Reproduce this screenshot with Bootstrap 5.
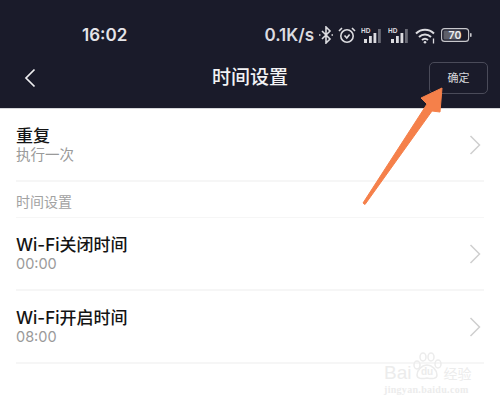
<!DOCTYPE html>
<html lang="zh">
<head>
<meta charset="UTF-8">
<meta name="viewport" content="width=device-width, initial-scale=1.0">
<title>时间设置</title>
<link href="https://cdn.jsdelivr.net/npm/bootstrap@5.3.0/dist/css/bootstrap.min.css" rel="stylesheet">
<style>
  html, body { height: 407px; overflow: hidden; }
  body { font-family: "Inter", "Noto Sans CJK SC", sans-serif; background: #fff; color: #161616; position: relative; }
  .app-head { background: #1a1b2a; height: 109px; color: #eeeef0; border-bottom: 1px solid #d5d6da; }
  .status-row { height: 48px; padding: 22px 28px 0 82px; }
  .clock { font-size: 17px; font-weight: 600; line-height: 26px; color: #e4e4e8; }
  .net { font-size: 17px; font-weight: 600; line-height: 26px; color: #dcdce0; }
  .stat-icons { gap: 5px; }
  .title-row { height: 60px; padding: 0 12px 0 24px; position: relative; }
  .back-icon { margin-top: 20px; }
  .page-title { position: absolute; left: 0; right: 0; top: 15px; text-align: center; font-size: 19px; font-weight: 500; line-height: 30px; color: #f2f2f4; }
  .ok-btn { width: 59px; height: 32px; margin-top: 14px; padding: 0; font-size: 11px; color: #d8d8dc; border: 1px solid #4a4b59; border-radius: 5px; background: transparent; }
  .set-list { padding: 0 16px; }
  .set-item { height: 73px; border-bottom: 2px solid #f6f6f6; padding: 15px 0 0; }
  .set-name { font-size: 17px; font-weight: 500; line-height: 24px; color: #141414; }
  .set-val { font-size: 14.5px; line-height: 14px; color: #9a9a9a; }
  .set-sect { height: 36px; border-bottom: 1px solid #f6f6f6; font-size: 14px; line-height: 20px; padding-top: 10px; color: #a2a2a2; }
  .chev { margin: 11px 3px 0 0; }
  .over-arrow { position: absolute; left: 355px; top: 84px; }
  .wmark { position: absolute; left: 384px; top: 352px; width: 92px; color: #ececec; white-space: nowrap; }
  .wmark-top { height: 29px; }
  .wmark-bai { font-size: 19px; line-height: 20px; margin-top: 11px; font-family: "Liberation Sans", sans-serif; }
  .wmark-cn { font-size: 14px; line-height: 16px; margin-top: 13px; font-family: "Noto Sans CJK SC", sans-serif; }
  .wmark-url { font-size: 10px; line-height: 12px; font-weight: 700; font-family: "Liberation Serif", serif; margin-top: 3px; letter-spacing: .3px; }
</style>
</head>
<body>
  <div class="app-head">
    <div class="status-row d-flex align-items-center justify-content-between">
      <span class="clock">16:02</span>
      <div class="stat-icons d-flex align-items-center">
        <span class="net">0.1K/s</span>
        <!-- bluetooth -->
        <svg width="14" height="18" viewBox="0 0 14 18" fill="none" stroke="#dcdce0" stroke-width="1.6"><path d="M3 5l8 8-4 4V1l4 4-8 8"/><path d="M0 9h1.5M12.5 9H14"/></svg>
        <!-- alarm -->
        <svg width="18" height="18" viewBox="0 0 18 18" fill="none" stroke="#dcdce0" stroke-width="1.6"><circle cx="9" cy="10" r="6.200"/><path d="M6.500 9.500l2.300 2.500 2.800-3.500M1 5l3-3M17 5l-3-3"/></svg>
        <!-- signal 1 -->
        <svg width="22" height="17" viewBox="0 0 22 17" fill="#dcdce0"><text x="0" y="6" font-size="6.500" font-weight="700" font-family="Liberation Sans">HD</text><rect x="3" y="12" width="3" height="4"/><rect x="8" y="9" width="2.800" height="7"/><rect x="12.500" y="6" width="2.800" height="10"/><rect x="17" y="2" width="2.800" height="14" fill="#6a6b76"/></svg>
        <!-- signal 2 -->
        <svg width="22" height="17" viewBox="0 0 22 17" fill="#dcdce0"><text x="0" y="6" font-size="6.500" font-weight="700" font-family="Liberation Sans">HD</text><rect x="3" y="12" width="3" height="4"/><rect x="8" y="9" width="2.800" height="7"/><rect x="12.500" y="6" width="2.800" height="10"/><rect x="17" y="2" width="2.800" height="14" fill="#6a6b76"/></svg>
        <!-- wifi -->
        <svg width="21" height="17" viewBox="0 0 21 17" fill="none" stroke="#dcdce0" stroke-width="2"><path d="M1 6.500c5.200-5 12.800-5 18 0M4 10c3.500-3.200 8.500-3.200 12 0M7 13c1.800-1.500 4.200-1.500 6 0"/><circle cx="10" cy="15.200" r="1.300" fill="#dcdce0" stroke="none"/><path d="M18.500 11.500v5" stroke-width="1.300"/></svg>
        <!-- battery -->
        <svg width="31" height="14" viewBox="0 0 31 14"><rect x=".6" y=".6" width="27" height="12.800" rx="3" fill="none" stroke="#c8c8cc" stroke-width="1.100"/><rect x="2.500" y="2.500" width="17" height="9" rx="1" fill="#5e5f69"/><rect x="29" y="5" width="1.600" height="4" rx=".8" fill="#c8c8cc"/><text x="14" y="11" text-anchor="middle" font-size="10.500" font-weight="600" font-family="Inter" fill="#eeeef0">70</text></svg>
      </div>
    </div>
    <div class="title-row d-flex align-items-start justify-content-between">
      <svg class="back-icon" width="12" height="20" viewBox="0 0 12 20" fill="none" stroke="#eeeef0" stroke-width="1.700"><path d="M10.500 1.500L2 10l8.500 8.500"/></svg>
      <div class="page-title">时间设置</div>
      <button type="button" class="btn ok-btn">确定</button>
    </div>
  </div>

  <div class="set-list">
    <div class="set-item d-flex justify-content-between">
      <div><div class="set-name">重复</div><div class="set-val">执行一次</div></div>
      <svg class="chev" width="12" height="20" viewBox="0 0 12 20" fill="none" stroke="#cfcfcf" stroke-width="1.500"><path d="M1.500 1l9 9-9 9"/></svg>
    </div>
    <div class="set-sect">时间设置</div>
    <div class="set-item d-flex justify-content-between">
      <div><div class="set-name">Wi-Fi关闭时间</div><div class="set-val">00:00</div></div>
      <svg class="chev" width="12" height="20" viewBox="0 0 12 20" fill="none" stroke="#cfcfcf" stroke-width="1.500"><path d="M1.500 1l9 9-9 9"/></svg>
    </div>
    <div class="set-item d-flex justify-content-between">
      <div><div class="set-name">Wi-Fi开启时间</div><div class="set-val">08:00</div></div>
      <svg class="chev" width="12" height="20" viewBox="0 0 12 20" fill="none" stroke="#cfcfcf" stroke-width="1.500"><path d="M1.500 1l9 9-9 9"/></svg>
    </div>
  </div>

  <!-- annotation arrow over the screenshot -->
  <svg class="over-arrow" width="95" height="125" viewBox="0 0 95 125" fill="#f5804a"><path d="M87 4L66 14 72 20 8 119 10 120.500 77 27 85 28z" stroke="#f5804a" stroke-width="1" stroke-linejoin="round"/></svg>

  <div class="wmark">
    <div class="wmark-top d-flex">
      <span class="wmark-bai">Bai</span>
      <svg width="32" height="29" viewBox="0 0 32 29" fill="none" stroke="#ececec" stroke-width="1.500"><ellipse cx="6" cy="13" rx="3" ry="4"/><ellipse cx="12" cy="5" rx="3" ry="4"/><ellipse cx="20" cy="5" rx="3" ry="4"/><ellipse cx="27" cy="12" rx="3" ry="4"/><path d="M6 23c0-5 5-10 10-10s10 5 10 10c0 4-5 4-10 3-5 1-10 1-10-3z"/><text x="16" y="23" text-anchor="middle" font-size="10" font-weight="700" font-family="Liberation Sans" fill="#ececec" stroke="none">du</text></svg>
      <span class="wmark-cn">经验</span>
    </div>
    <div class="wmark-url">jingyan.baidu.com</div>
  </div>

  <script src="https://cdn.jsdelivr.net/npm/bootstrap@5.3.0/dist/js/bootstrap.bundle.min.js"></script>
</body>
</html>
